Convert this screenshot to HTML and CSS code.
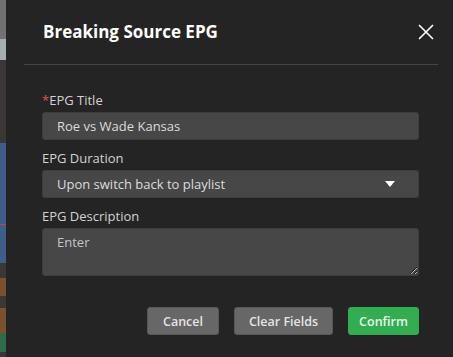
FILE: index.html
```html
<!DOCTYPE html>
<html lang="en">
<head>
  <meta charset="UTF-8" />
  <title>Breaking Source EPG</title>
  <link rel="stylesheet" href="styles.css">
</head>
<body>

  <!-- bits of the page behind the dialog -->
  <div class="backdrop">
    <div class="strip s-gray" style="height: 39px"></div>
    <div class="strip s-light" style="height: 21px"></div>
    <div class="strip s-dark" style="height: 83px"></div>
    <div class="strip s-blue" style="height: 81px"></div>
    <div class="strip s-red" style="height: 1px"></div>
    <div class="strip s-blue" style="height: 38px"></div>
    <div class="strip s-dark" style="height: 15px"></div>
    <div class="strip s-brown" style="height: 18px"></div>
    <div class="strip s-dark" style="height: 12px"></div>
    <div class="strip s-brown" style="height: 25px"></div>
    <div class="strip s-green" style="height: 19px"></div>
    <div class="strip s-dark" style="height: 5px"></div>
  </div>

  <div class="modal">
    <div class="modal-header">
      <h2>Breaking Source EPG</h2>
      <button class="close" aria-label="Close">
        <svg width="16" height="16" viewBox="0 0 16 16">
          <path d="M1 1 L15 15 M15 1 L1 15" stroke="#fff" stroke-width="1.6" fill="none"/>
        </svg>
      </button>
    </div>

    <div class="modal-body">
      <div class="field">
        <label><span class="req">*</span>EPG Title</label>
        <input type="text" value="Roe vs Wade Kansas">
      </div>

      <div class="field">
        <label>EPG Duration</label>
        <div class="select">
          <span>Upon switch back to playlist</span>
          <svg width="10" height="6" viewBox="0 0 10 6"><path d="M0 0 H10 L5 6 Z" fill="#fff"/></svg>
        </div>
      </div>

      <div class="field">
        <label>EPG Description</label>
        <textarea placeholder="Enter"></textarea>
      </div>

      <div class="actions">
        <button class="btn btn-cancel">Cancel</button>
        <button class="btn btn-clear">Clear Fields</button>
        <button class="btn btn-confirm">Confirm</button>
      </div>
    </div>
  </div>

</body>
</html>
```

FILE: styles.css
```css
html, body {
  margin: 0;
  height: 100%;
}

body {
  display: flex;
  background-color: #242424;
  font-family: 'Open Sans', 'Noto Sans', sans-serif;
  color: #d4d4d4;
  overflow: hidden;
}

.backdrop {
  width: 6px;
  display: flex;
  flex-direction: column;
  flex-shrink: 0;
}

.s-gray { background-color: #727272; }
.s-light { background-color: #a7aeb2; }
.s-dark { background-color: #3b3737; }
.s-blue { background-color: #3f5f88; }
.s-red { background-color: #b84a42; }
.s-brown { background-color: #7b5130; }
.s-green { background-color: #2e6b4b; }

.modal {
  flex: 1;
  background-color: #242424;
  padding: 0 15px 0 18px;
}

.modal-header {
  height: 64px;
  border-bottom: 1px solid #454545;
  display: flex;
  align-items: center;
  justify-content: space-between;
  padding: 0 4px 0 19px;
}

.modal-header h2 {
  margin: 0 0 2px 0;
  font-size: 17px;
  font-weight: 700;
  color: #fff;
}

.close {
  background: none;
  border: none;
  padding: 0;
  width: 16px;
  height: 16px;
  cursor: pointer;
}

.close svg {
  display: block;
}

.modal-body {
  padding: 26px 19px 0 18px;
}

.field {
  margin-bottom: 9px;
}

.field label {
  display: block;
  font-size: 13px;
  line-height: 18px;
  margin-bottom: 3px;
  color: #d2d2d2;
}

.req {
  color: #e05454;
}

input, .select, textarea {
  display: block;
  box-sizing: border-box;
  width: 100%;
  background-color: #474747;
  border: 1px solid #3e3e3e;
  border-radius: 3px;
  color: #dcdcdc;
  font-family: inherit;
  font-size: 13px;
  padding: 0 14px;
}

input {
  height: 28px;
  outline: none;
}

.select {
  height: 28px;
  display: flex;
  align-items: center;
  justify-content: space-between;
  padding-right: 23px;
}

textarea {
  height: 48px;
  padding-top: 4px;
  resize: vertical;
  outline: none;
}

textarea::placeholder {
  color: #c4c4c4;
}

.actions {
  display: flex;
  justify-content: flex-end;
  gap: 15px;
  margin-top: 31px;
}

.btn {
  height: 28px;
  padding: 0;
  font-family: inherit;
  font-size: 12.5px;
  font-weight: 600;
  color: #e4e4e4;
  background-color: #676767;
  border: 1px solid #575757;
  border-radius: 3px;
  cursor: pointer;
}

.btn-cancel { width: 72px; }
.btn-clear { width: 99px; }

.btn-confirm {
  width: 71px;
  background-color: #32ad52;
  border-color: #32ad52;
  color: #eaf5ec;
}
```
